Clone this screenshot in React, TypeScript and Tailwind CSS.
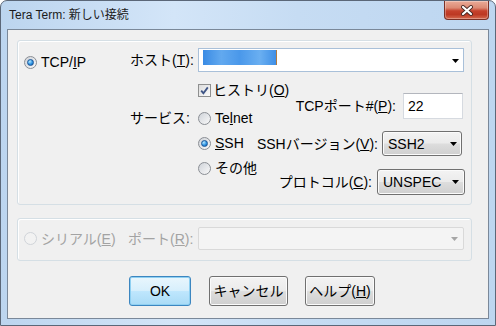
import React from 'react';

const Arrow = ({ color = '#000000' }: { color?: string }) => (
  <svg width="7" height="4" viewBox="0 0 7 4" className="shrink-0">
    <path d="M0 0H7L3.5 4Z" fill={color} />
  </svg>
);

function Radio({ checked = false, disabled = false }: { checked?: boolean; disabled?: boolean }) {
  return (
    <span
      className={
        disabled
          ? 'flex h-[13px] w-[13px] shrink-0 rounded-full border border-[#d0d4d9] bg-[#f2f2f2]'
          : 'flex h-[13px] w-[13px] shrink-0 items-center justify-center rounded-full border border-[#8a8e94] bg-[linear-gradient(135deg,#cfd3d9,#f9f9f9)]'
      }
    >
      {checked && (
        <span className="h-[7px] w-[7px] rounded-full border border-[#1a5597] bg-[radial-gradient(circle_at_35%_30%,#b5e8ff,#2e93e2_55%,#0e5aa9)]" />
      )}
    </span>
  );
}

function Checkbox() {
  return (
    <span className="flex h-[13px] w-[13px] shrink-0 items-center justify-center border border-[#8e8f8f] bg-[linear-gradient(135deg,#dcdcdc,#fbfbfb)]">
      <svg width="9" height="9" viewBox="0 0 9 9">
        <path d="M1.2 4.6 L3.4 7.2 L7.8 1.4" stroke="#3f5586" strokeWidth="1.8" fill="none" />
      </svg>
    </span>
  );
}

const face =
  'flex items-center rounded-[3px] border border-[#707070] bg-[linear-gradient(180deg,#f3f3f3_0%,#ebebeb_48%,#dddddd_52%,#cfcfcf_100%)] shadow-[inset_0_0_0_1px_#fbfbfb]';

export default function App() {
  return (
    <div className="flex h-[326px] w-[496px] flex-col overflow-hidden rounded-t-[7px] border border-[#5b6778] bg-[linear-gradient(90deg,#bcd5ef,#d3e5f8_35%,#c6dcf3_60%,#bdd6f0)] font-['Liberation_Sans','Noto_Sans_CJK_JP',sans-serif] text-[14px] text-black">
      {/* title bar */}
      <div className="flex h-[28px] shrink-0 items-start">
        <span className="ml-[8px] mt-[6px] whitespace-nowrap text-[12px] leading-[16px] text-[#1b1b1b]">
          Tera Term: 新しい接続
        </span>
        <div className="flex-1" />
        <div className="mr-[6px] flex h-[19px] w-[45px] items-center justify-center rounded-b-[4px] border border-t-0 border-[#7a3127] bg-[linear-gradient(180deg,#eaab98_0%,#dc8a74_38%,#c5412c_55%,#bd3924_75%,#d56a4f_100%)] shadow-[inset_0_0_0_1px_rgba(255,255,255,0.3)]">
          <svg width="14" height="11" viewBox="0 0 14 11">
            <path d="M3 2 L11 9 M11 2 L3 9" stroke="#4b2b26" strokeWidth="4" strokeLinecap="round" />
            <path d="M3 2 L11 9 M11 2 L3 9" stroke="#ffffff" strokeWidth="2.2" strokeLinecap="round" />
          </svg>
        </div>
      </div>

      {/* client area */}
      <div className="ml-[6px] flex h-[290px] w-[482px] flex-col border border-[#7a8899] bg-[#f0f0f0]">
        {/* TCP/IP group */}
        <div className="ml-[9px] mt-[10px] flex h-[165px] w-[455px] rounded-[3px] border border-[#d5dfe5] shadow-[inset_1px_1px_0_#ffffff]">
          <div className="w-[112px]">
            <div className="mt-[13px] flex h-[16px] items-center gap-[4px] pl-[6px] leading-[16px]">
              <Radio checked />
              <span>
                TCP/<u>I</u>P
              </span>
            </div>
          </div>
          <div className="flex flex-col">
            <div className="mt-[7px] flex h-[24px] items-center">
              <span className="w-[68px] whitespace-nowrap leading-[16px]">
                ホスト(<u>T</u>):
              </span>
              <div className="flex h-[24px] w-[266px] items-start border border-[#a9c0d9] bg-white">
                <div className="ml-[4px] mt-[1px] h-[15px] w-[73px] bg-[linear-gradient(90deg,#3a8be4,#62a9ef_25%,#4a98ea_50%,#6aaff1_78%,#3f8fe6)] blur-[0.5px]" />
                <div className="mt-[1px] h-[15px] w-[1px] bg-[#b07a40]" />
                <div className="flex-1" />
                <div className="mr-[4px] mt-[10px]">
                  <Arrow />
                </div>
              </div>
            </div>
            <div className="flex">
              <div className="w-[68px]">
                <div className="mt-[38px] h-[16px] whitespace-nowrap leading-[16px]">サービス:</div>
              </div>
              <div className="flex w-[58px] flex-col">
                <div className="mt-[10px] flex h-[16px] items-center gap-[2px] whitespace-nowrap leading-[16px]">
                  <Checkbox />
                  <span>
                    ヒストリ(<u>O</u>)
                  </span>
                </div>
                <div className="mt-[12px] flex h-[16px] items-center gap-[4px] whitespace-nowrap leading-[16px]">
                  <Radio />
                  <span>
                    Te<u>l</u>net
                  </span>
                </div>
                <div className="mt-[9px] flex h-[16px] items-center gap-[4px] whitespace-nowrap leading-[16px]">
                  <Radio checked />
                  <span>
                    <u>S</u>SH
                  </span>
                </div>
                <div className="mt-[9px] flex h-[16px] items-center gap-[4px] whitespace-nowrap leading-[16px]">
                  <Radio />
                  <span>その他</span>
                </div>
              </div>
              <div className="flex w-[209px] flex-col items-end">
                <div className="mr-[2px] mt-[21px] flex h-[26px] items-center">
                  <span className="whitespace-nowrap leading-[16px]">
                    TCPポート#(<u>P</u>):
                  </span>
                  <div className="ml-[7px] flex h-[26px] w-[60px] items-center border border-[#d6dae0] border-t-[#b3b6bd] bg-white pl-[4px] leading-[16px]">
                    22
                  </div>
                </div>
                <div className="mr-[3px] mt-[12px] flex h-[25px] items-center">
                  <span className="whitespace-nowrap leading-[16px]">
                    SSHバージョン(<u>V</u>):
                  </span>
                  <div className={`ml-[4px] h-[25px] w-[80px] justify-between pl-[5px] pr-[4px] ${face}`}>
                    <span className="leading-[16px]">SSH2</span>
                    <Arrow />
                  </div>
                </div>
                <div className="mt-[13px] flex h-[26px] items-center">
                  <span className="whitespace-nowrap leading-[16px]">
                    プロトコル(<u>C</u>):
                  </span>
                  <div className={`ml-[5px] h-[26px] w-[88px] justify-between pl-[5px] pr-[5px] ${face}`}>
                    <span className="leading-[16px]">UNSPEC</span>
                    <Arrow />
                  </div>
                </div>
              </div>
            </div>
          </div>
        </div>

        {/* Serial group */}
        <div className="ml-[9px] mt-[13px] flex h-[43px] w-[455px] items-start rounded-[3px] border border-[#d5dfe5] shadow-[inset_1px_1px_0_#ffffff]">
          <div className="mt-[8px] flex h-[23px] items-center text-[#a3a3a3]">
            <div className="flex w-[110px] items-center gap-[4px] pl-[6px] leading-[16px]">
              <Radio disabled />
              <span className="whitespace-nowrap">
                シリアル(<u>E</u>)
              </span>
            </div>
            <span className="w-[70px] whitespace-nowrap leading-[16px]">
              ポート(<u>R</u>):
            </span>
            <div className="flex h-[23px] w-[266px] items-center justify-end rounded-[2px] border border-[#d9d9d9] bg-[#f4f4f4] pr-[5px]">
              <Arrow color="#a6a6a6" />
            </div>
          </div>
        </div>

        {/* buttons */}
        <div className="mt-[15px] flex h-[30px]">
          <div className="ml-[121px] flex h-[30px] w-[62px] items-center justify-center rounded-[3px] border border-[#3c86c0] bg-[linear-gradient(180deg,#e9f6fd_0%,#d7effc_48%,#bee6fd_52%,#a9dbf6_100%)] shadow-[inset_0_0_0_1px_#8fd0f2] leading-[16px]">
            OK
          </div>
          <div className={`ml-[18px] h-[30px] w-[79px] justify-center leading-[16px] ${face}`}>キャンセル</div>
          <div className={`ml-[17px] h-[30px] w-[70px] justify-center whitespace-nowrap leading-[16px] ${face}`}>
            ヘルプ(<u>H</u>)
          </div>
        </div>
      </div>
    </div>
  );
}
